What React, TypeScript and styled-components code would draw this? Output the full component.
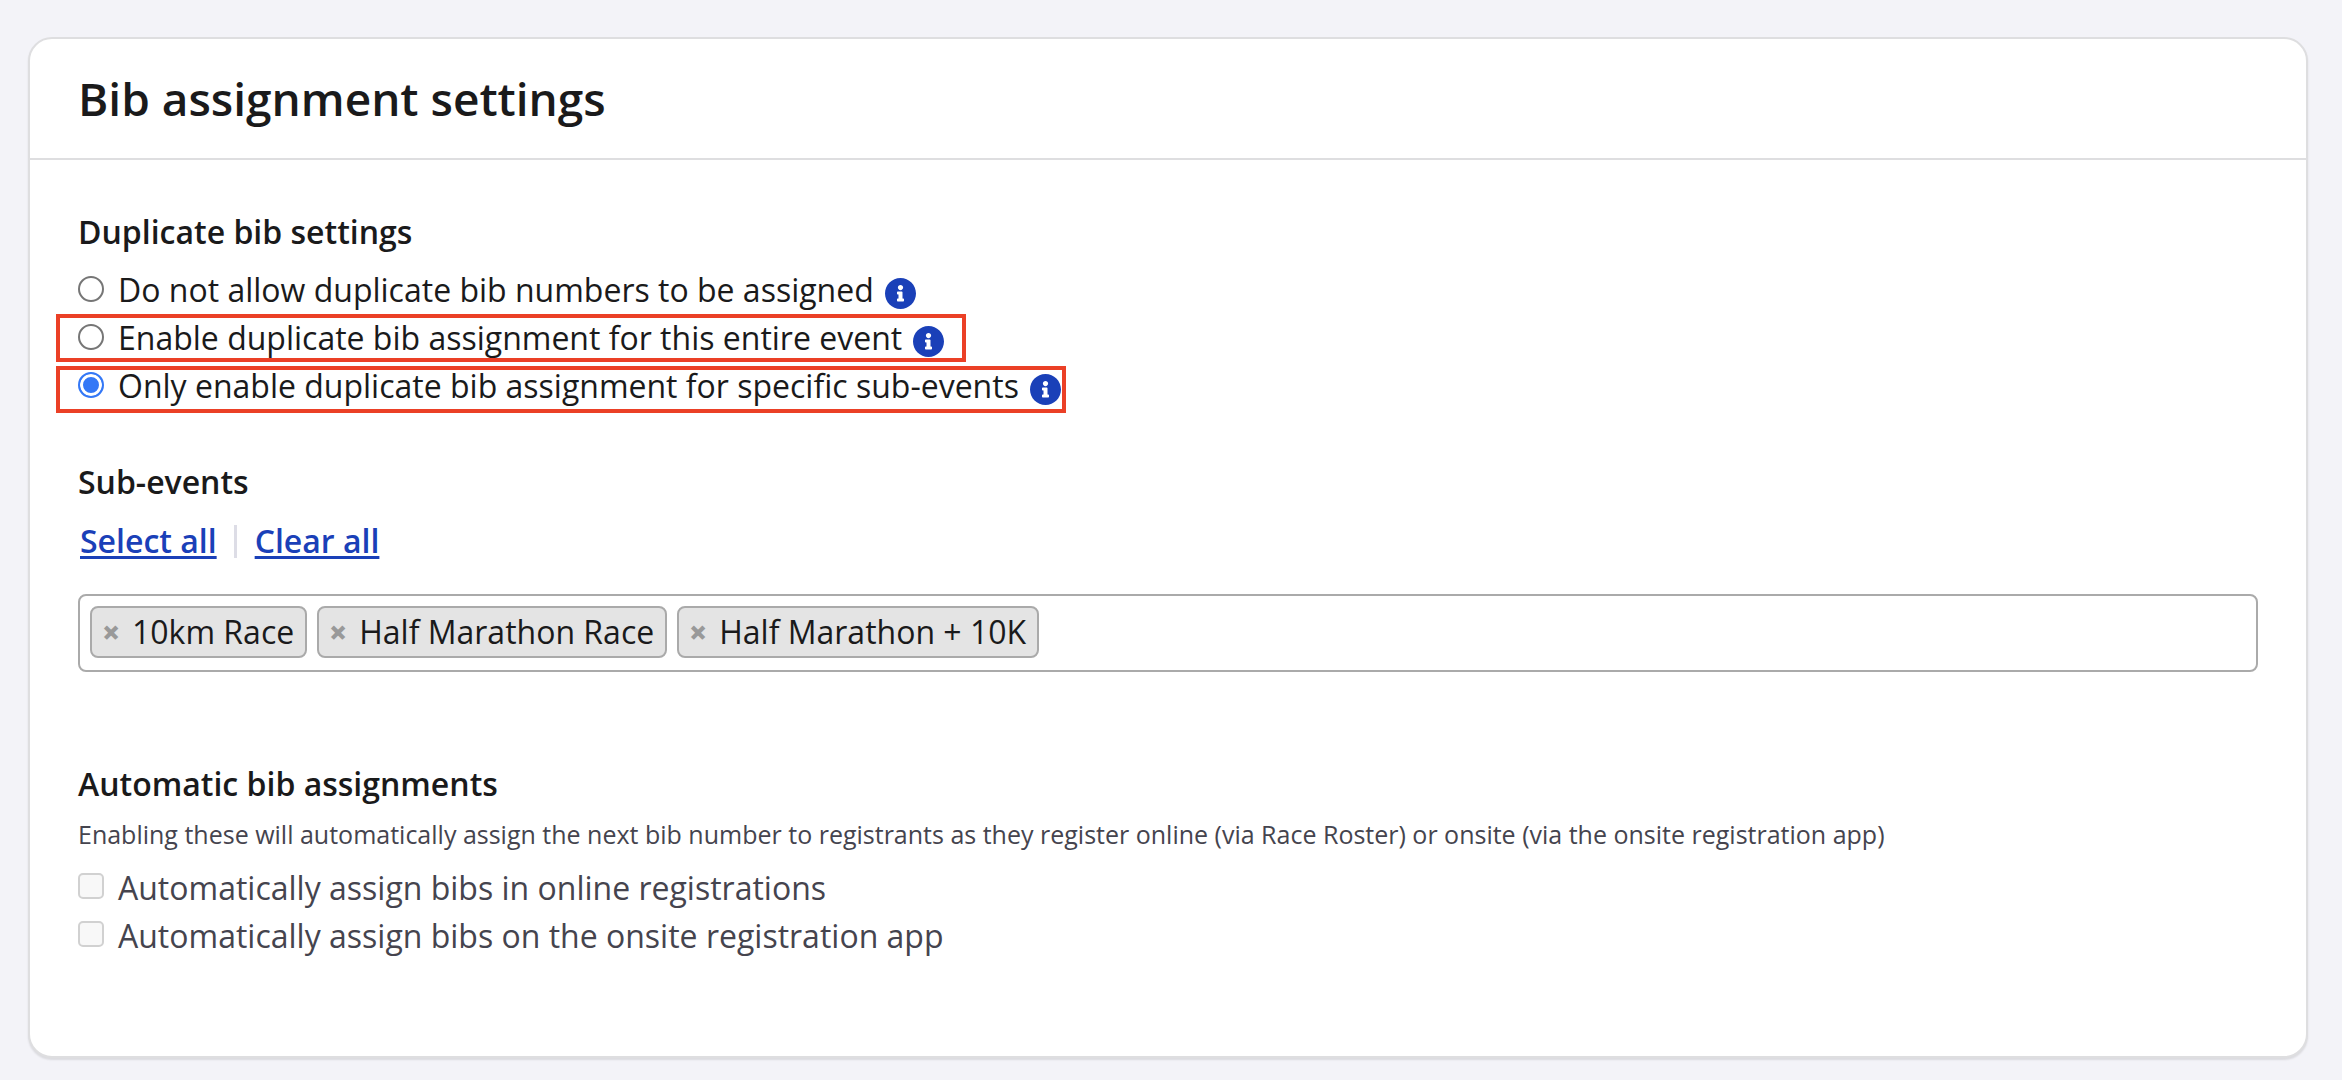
import React, { useState } from "react";
import styled, { createGlobalStyle, css } from "styled-components";

const GlobalStyle = createGlobalStyle`
  *, *::before, *::after { box-sizing: border-box; }
  body {
    margin: 0;
    background: #f3f3f8;
    color: #1a1a1b;
    font-family: "Open Sans", "Noto Sans", sans-serif;
    font-size: 32px;
    line-height: 48px;
  }
`;

const Page = styled.main`
  padding: 37px 34px 22px 28px;
`;

const Card = styled.section`
  background: #ffffff;
  border: 2px solid #dedee0;
  border-radius: 24px;
  box-shadow: 0 2px 2px rgba(0, 0, 0, 0.1);
`;

const CardHeader = styled.header`
  padding: 27px 48px 28px;
  border-bottom: 2px solid #dedee0;
`;

const Title = styled.h1`
  margin: 0;
  font-size: 46px;
  font-weight: 600;
  line-height: 64px;
`;

const CardBody = styled.div`
  display: flex;
  flex-direction: column;
  padding: 48px 48px 96px;
`;

const Group = styled.fieldset<{ $spaceAfter?: number }>`
  min-width: 0;
  margin: 0 0 ${(p) => p.$spaceAfter ?? 0}px;
  padding: 0;
  border: 0;
`;

const GroupTitle = styled.legend<{ $gap: number }>`
  display: block;
  margin-bottom: ${(p) => p.$gap}px;
  padding: 0;
  font-weight: 600;
`;

const Options = styled.div`
  display: flex;
  flex-direction: column;
  align-items: flex-start;
`;

type Outline = { top: number; right: number; bottom: number };

const OptionRow = styled.div<{ $outline?: Outline }>`
  position: relative;
  display: flex;
  align-items: center;
  gap: 11px;

  ${(p) =>
    p.$outline &&
    css`
      &::after {
        content: "";
        position: absolute;
        top: ${p.$outline.top}px;
        right: ${p.$outline.right}px;
        bottom: ${p.$outline.bottom}px;
        left: -22px;
        border: 4px solid #eb4026;
        pointer-events: none;
      }
    `}
`;

const OptionLabel = styled.label<{ $muted?: boolean }>`
  display: flex;
  align-items: center;
  gap: 14px;
  color: ${(p) => (p.$muted ? "#45444e" : "inherit")};
`;

const Radio = styled.input.attrs({ type: "radio" })`
  appearance: none;
  width: 26px;
  height: 26px;
  margin: 0 0 2px;
  border: 2px solid #767676;
  border-radius: 50%;
  background: #ffffff;

  &:checked {
    border-color: #3478f6;
    background: #3478f6;
    box-shadow: inset 0 0 0 3px #ffffff;
  }
`;

const Checkbox = styled.input.attrs({ type: "checkbox" })`
  appearance: none;
  width: 26px;
  height: 26px;
  margin: 0 0 4px;
  border: 2px solid #d1d1d1;
  border-radius: 5px;
  background: #f8f8f8;
`;

const InfoButton = styled.button`
  display: flex;
  margin: 6px 0 0;
  padding: 0;
  border: 0;
  background: none;
  color: #1a40b8;
`;

const LinkBar = styled.div`
  display: flex;
  align-items: center;
  padding-left: 2px;
`;

const TextLink = styled.a`
  color: #1a40b8;
  font-weight: 600;
  text-decoration: underline;
  text-decoration-thickness: 3px;
  text-underline-offset: 3px;
  text-decoration-skip-ink: none;
`;

const LinkDivider = styled.span`
  width: 3px;
  height: 33px;
  margin: 0 18px 0 17px;
  background: #dddde6;
`;

const TagField = styled.ul`
  display: flex;
  flex-wrap: wrap;
  gap: 10px;
  margin: 29px 0 0;
  padding: 10px 10px 12px;
  border: 2px solid #aaaaaa;
  border-radius: 8px;
  background: #ffffff;
  list-style: none;
`;

const Tag = styled.li`
  display: flex;
  align-items: center;
  padding-right: 11px;
  border: 2px solid #aaaaaa;
  border-radius: 8px;
  background: #e4e4e4;
`;

const RemoveButton = styled.button`
  width: 40px;
  padding: 0 2px 0 0;
  border: 0;
  background: none;
  color: #999999;
  font: inherit;
  font-weight: 800;
`;

const Hint = styled.p`
  margin: 0 0 12px;
  color: #45444e;
  font-size: 25px;
  line-height: 36px;
`;

function InfoIcon() {
  return (
    <svg width="31" height="31" viewBox="8 8 496 496" aria-hidden="true">
      <path
        fill="currentColor"
        d="M256 8C119 8 8 119 8 256s111 248 248 248 248-111 248-248S393 8 256 8zm0 110c23.200 0 42 18.800 42 42s-18.800 42-42 42-42-18.800-42-42 18.800-42 42-42zm56 254c0 6.600-5.400 12-12 12h-88c-6.600 0-12-5.400-12-12v-24c0-6.600 5.400-12 12-12h12v-64h-12c-6.600 0-12-5.400-12-12v-24c0-6.600 5.400-12 12-12h64c6.600 0 12 5.400 12 12v100h12c6.600 0 12 5.400 12 12v24z"
      />
    </svg>
  );
}

const duplicateOptions: { id: string; label: string; outline?: Outline }[] = [
  { id: "none", label: "Do not allow duplicate bib numbers to be assigned" },
  {
    id: "event",
    label: "Enable duplicate bib assignment for this entire event",
    outline: { top: 0, right: -22, bottom: 0 },
  },
  {
    id: "sub-events",
    label: "Only enable duplicate bib assignment for specific sub-events",
    outline: { top: 4, right: -5, bottom: -3 },
  },
];

const allSubEvents = ["10km Race", "Half Marathon Race", "Half Marathon + 10K"];

const automaticOptions = [
  { id: "online", label: "Automatically assign bibs in online registrations" },
  { id: "onsite", label: "Automatically assign bibs on the onsite registration app" },
];

export default function App() {
  const [mode, setMode] = useState("sub-events");
  const [selected, setSelected] = useState(allSubEvents);

  const choose = (names: string[]) => (event: React.MouseEvent) => {
    event.preventDefault();
    setSelected(names);
  };

  return (
    <>
      <GlobalStyle />
      <Page>
        <Card>
          <CardHeader>
            <Title>Bib assignment settings</Title>
          </CardHeader>
          <CardBody>
            <Group $spaceAfter={48}>
              <GroupTitle $gap={10}>Duplicate bib settings</GroupTitle>
              <Options>
                {duplicateOptions.map((option) => (
                  <OptionRow key={option.id} $outline={option.outline}>
                    <OptionLabel htmlFor={option.id}>
                      <Radio
                        id={option.id}
                        name="duplicate-bibs"
                        checked={mode === option.id}
                        onChange={() => setMode(option.id)}
                      />
                      {option.label}
                    </OptionLabel>
                    <InfoButton type="button" aria-label="More information">
                      <InfoIcon />
                    </InfoButton>
                  </OptionRow>
                ))}
              </Options>
            </Group>

            <Group $spaceAfter={88}>
              <GroupTitle $gap={11}>Sub-events</GroupTitle>
              <LinkBar>
                <TextLink href="#select-all" onClick={choose(allSubEvents)}>
                  Select all
                </TextLink>
                <LinkDivider />
                <TextLink href="#clear-all" onClick={choose([])}>
                  Clear all
                </TextLink>
              </LinkBar>
              <TagField>
                {selected.map((name) => (
                  <Tag key={name}>
                    <RemoveButton
                      type="button"
                      aria-label={`Remove ${name}`}
                      onClick={() => setSelected(selected.filter((n) => n !== name))}
                    >
                      ×
                    </RemoveButton>
                    {name}
                  </Tag>
                ))}
              </TagField>
            </Group>

            <Group>
              <GroupTitle $gap={8}>Automatic bib assignments</GroupTitle>
              <Hint>
                Enabling these will automatically assign the next bib number to registrants as they
                register online (via Race Roster) or onsite (via the onsite registration app)
              </Hint>
              <Options>
                {automaticOptions.map((option) => (
                  <OptionLabel key={option.id} htmlFor={option.id} $muted>
                    <Checkbox id={option.id} disabled />
                    {option.label}
                  </OptionLabel>
                ))}
              </Options>
            </Group>
          </CardBody>
        </Card>
      </Page>
    </>
  );
}
